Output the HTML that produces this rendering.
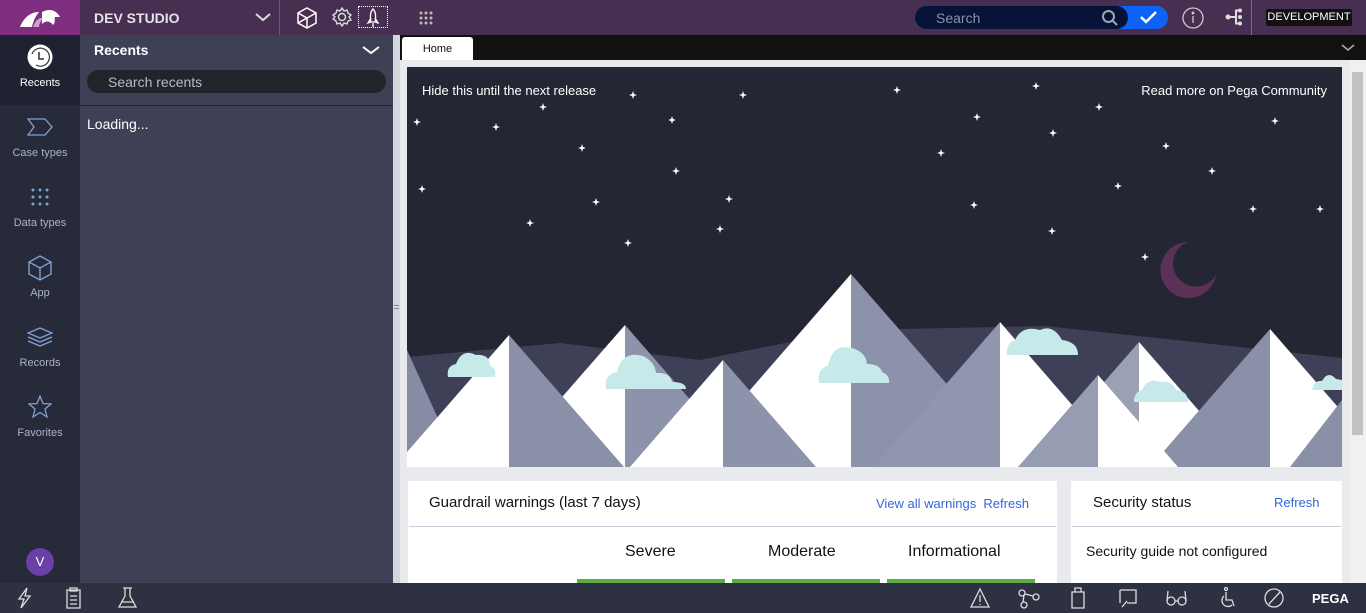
<!DOCTYPE html>
<html><head><meta charset="utf-8"><style>
*{margin:0;padding:0;box-sizing:border-box}
body{width:1366px;height:613px;overflow:hidden;font-family:"Liberation Sans",sans-serif;background:#e8eaee;position:relative}
.abs{position:absolute}
.top{left:0;top:0;width:1366px;height:35px;background:#472f52}
.logo{left:0;top:0;width:80px;height:35px;background:#7e2f7f}
.nav{left:0;top:35px;width:80px;height:548px;background:#272a39}
.navi{position:absolute;left:0;width:80px;text-align:center;color:#aab3c8;font-size:11px}
.rec{left:80px;top:35px;width:313px;height:548px;background:#3e4056}
.split{left:393px;top:35px;width:7px;height:548px;background:#d4d6dc}
.tabs{left:400px;top:35px;width:966px;height:25px;background:#111}
.bottom{left:0;top:583px;width:1366px;height:30px;background:#2e3142}
.card{background:#fff;position:absolute}
.link{color:#3366dd;font-size:13px}
</style></head><body>
<div class="abs top"></div>
<div class="abs logo"><svg width="80" height="35"><path d="M20 27 C24 17 31 12 39 12 C35 17 33 22 32 27 Z" fill="#fff"/><path d="M42 12 C50 8 56 10 60 17 L55 17 C54 20 56 22 53 25 C50 21 46 20 42 24 Z" fill="#fff"/><path d="M33 27 C35 21 39 17 43 18 C41 21 39 24 39 27Z" fill="#c9a3c9"/></svg></div>
<div class="abs" style="left:94px;top:10px;color:#e6e1ea;font-weight:bold;font-size:14px">DEV STUDIO</div>
<svg class="abs" style="left:255px;top:12px" width="16" height="10"><path d="M1 2 L8 8 L15 2" stroke="#ddd" stroke-width="2" fill="none"/></svg>
<div class="abs" style="left:279px;top:0;width:1px;height:35px;background:#6b5573"></div>
<svg class="abs" style="left:296px;top:7px" width="22" height="22" fill="none" stroke="#fff" stroke-width="1.5"><path d="M11 1 L20 6 L20 16 L11 21 L2 16 L2 6 Z M2 6 L11 11 L20 6 M11 11 L11 21 M2 16 L20 6"/></svg>
<svg class="abs" style="left:332px;top:7px" width="20" height="20" fill="none" stroke="#ddd" stroke-width="1.4"><circle cx="10" cy="10" r="3.5"/><path d="M10 1 L12 4 L15 3 L16 6 L19 8 L17 10 L19 13 L16 14 L15 17 L12 16 L10 19 L8 16 L5 17 L4 14 L1 12 L3 10 L1 8 L4 6 L5 3 L8 4 Z"/></svg>
<div class="abs" style="left:358px;top:6px;width:30px;height:22px;border:1px dotted #fff"></div>
<svg class="abs" style="left:365px;top:8px" width="16" height="20" fill="none" stroke="#fff" stroke-width="1.3"><path d="M8 1 C11 4 11 9 10 14 L6 14 C5 9 5 4 8 1 Z M6 10 L3 15 L6 14 M10 10 L13 15 L10 14 M8 15 L8 19"/></svg>
<svg class="abs" style="left:419px;top:11px" width="14" height="14" fill="#bbb"><circle cx="2" cy="2" r="1.5"/><circle cx="7" cy="2" r="1.5"/><circle cx="12" cy="2" r="1.5"/><circle cx="2" cy="7" r="1.5"/><circle cx="7" cy="7" r="1.5"/><circle cx="12" cy="7" r="1.5"/><circle cx="2" cy="12" r="1.5"/><circle cx="7" cy="12" r="1.5"/><circle cx="12" cy="12" r="1.5"/></svg>
<div class="abs" style="left:915px;top:6px;width:253px;height:23px;border-radius:12px;background:#0d63f5"></div>
<div class="abs" style="left:915px;top:6px;width:213px;height:23px;border-radius:12px;background:#061237;color:#8b93a8;font-size:14px;padding:4px 0 0 21px">Search</div>
<svg class="abs" style="left:1101px;top:9px" width="18" height="18" fill="none" stroke="#9aa" stroke-width="2"><circle cx="7.5" cy="7.5" r="5.5"/><path d="M12 12 L16 16"/></svg>
<svg class="abs" style="left:1140px;top:11px" width="18" height="13" fill="none" stroke="#fff" stroke-width="2.5"><path d="M1 6 L6 11 L16 1"/></svg>
<svg class="abs" style="left:1182px;top:7px" width="22" height="22" fill="none" stroke="#ccc" stroke-width="1.3"><circle cx="11" cy="11" r="10"/><path d="M11 9 L11 16"/><circle cx="11" cy="6" r=".8" fill="#ccc"/></svg>
<svg class="abs" style="left:1225px;top:8px" width="18" height="18" fill="#ddd"><circle cx="3" cy="9" r="2.5"/><circle cx="15" cy="2.5" r="2"/><circle cx="15" cy="9" r="2"/><circle cx="15" cy="15.5" r="2"/><path d="M3 8 h8 v2 h-8z M10 2 h2 v14 h-2z M10 1.5h4v2h-4z M10 14.5h4v2h-4z" /></svg>
<div class="abs" style="left:1251px;top:0;width:1px;height:35px;background:#786880"></div>
<div class="abs" style="left:1266px;top:9px;width:86px;height:17px;background:#111;color:#fff;font-size:11px;text-align:center;line-height:17px;border-radius:2px">DEVELOPMENT</div>

<div class="abs nav"></div>
<div class="abs" style="left:0;top:35px;width:80px;height:70px;background:#1f2230"></div>
<svg class="abs" style="left:27px;top:44px" width="26" height="26"><circle cx="13" cy="13" r="12.5" fill="#fff"/><path d="M5 10 A9 9 0 1 1 9 21" stroke="#333" stroke-width="1.2" fill="none"/><path d="M12 8 L12 15 L17 15" stroke="#333" stroke-width="1.5" fill="none"/></svg>
<div class="navi" style="top:77px;color:#fff">Recents</div>
<svg class="abs" style="left:27px;top:118px" width="26" height="18" fill="none" stroke="#7ea1d8" stroke-width="1.3"><path d="M1 1 L18 1 L25 9 L18 17 L1 17 L7 9 Z"/></svg>
<div class="navi" style="top:147px">Case types</div>
<svg class="abs" style="left:31px;top:188px" width="18" height="18" fill="#7ea1d8"><circle cx="2" cy="2" r="1.5"/><circle cx="9" cy="2" r="1.5"/><circle cx="16" cy="2" r="1.5"/><circle cx="2" cy="9" r="1.5"/><circle cx="9" cy="9" r="1.5"/><circle cx="16" cy="9" r="1.5"/><circle cx="2" cy="16" r="1.5"/><circle cx="9" cy="16" r="1.5"/><circle cx="16" cy="16" r="1.5"/></svg>
<div class="navi" style="top:217px">Data types</div>
<svg class="abs" style="left:28px;top:255px" width="25" height="26" fill="none" stroke="#7ea1d8" stroke-width="1.4"><path d="M12 1 L23 7 L23 19 L12 25 L1 19 L1 7 Z M1 7 L12 13 L23 7 M12 13 L12 25"/></svg>
<div class="navi" style="top:287px">App</div>
<svg class="abs" style="left:27px;top:327px" width="26" height="20" fill="none" stroke="#7ea1d8" stroke-width="1.3"><path d="M13 1 L25 6 L13 11 L1 6 Z M1 10 L13 15 L25 10 M1 14 L13 19 L25 14"/></svg>
<div class="navi" style="top:357px">Records</div>
<svg class="abs" style="left:28px;top:395px" width="24" height="23" fill="none" stroke="#7ea1d8" stroke-width="1.3"><path d="M12 1 L15 8.5 L23 9 L17 14 L19 22 L12 17.5 L5 22 L7 14 L1 9 L9 8.5 Z"/></svg>
<div class="navi" style="top:427px">Favorites</div>
<div class="abs" style="left:26px;top:548px;width:28px;height:28px;border-radius:50%;background:#6a3fa6;color:#fff;font-size:13px;text-align:center;line-height:28px">V</div>

<div class="abs rec"></div>
<div class="abs" style="left:94px;top:42px;color:#fff;font-weight:bold;font-size:14px">Recents</div>
<svg class="abs" style="left:362px;top:45px" width="18" height="10"><path d="M1 2 L9 8 L17 2" stroke="#fff" stroke-width="2" fill="none"/></svg>
<div class="abs" style="left:87px;top:70px;width:299px;height:23px;border-radius:12px;background:#1f2529;color:#b8bcc4;font-size:14px;padding:4px 0 0 21px">Search recents</div>
<div class="abs" style="left:80px;top:105px;width:313px;height:1px;background:#222532"></div>
<div class="abs" style="left:87px;top:116px;color:#fff;font-size:14px">Loading...</div>
<div class="abs split"></div>
<div class="abs" style="left:394px;top:305px;width:5px;height:1px;background:#888;box-shadow:0 3px #888"></div>

<div class="abs tabs"></div>
<div class="abs" style="left:402px;top:37px;width:71px;height:23px;background:#fff;border-radius:3px 3px 0 0;font-size:11px;text-align:center;line-height:24px;color:#111">Home</div>
<svg class="abs" style="left:1341px;top:44px" width="14" height="8"><path d="M1 1 L7 6 L13 1" stroke="#aaa" stroke-width="1.5" fill="none"/></svg>
<div class="abs" style="left:1350px;top:60px;width:16px;height:523px;background:#f0f0f0"></div>
<div class="abs" style="left:1352px;top:72px;width:11px;height:363px;background:#c1c1c1"></div>

<svg class="abs" style="left:407px;top:67px" width="935" height="400" viewBox="407 67 935 400">
<rect x="407" y="67" width="935" height="400" fill="#242633"/>
<defs><path id="s" d="M0 -4 L1 -1 L4 0 L1 1 L0 4 L-1 1 L-4 0 L-1 -1Z"/></defs>
<g fill="#fff">
<use href="#s" x="417" y="122"/><use href="#s" x="496" y="127"/><use href="#s" x="543" y="107"/><use href="#s" x="582" y="148"/><use href="#s" x="633" y="95"/><use href="#s" x="672" y="120"/><use href="#s" x="676" y="171"/><use href="#s" x="743" y="95"/><use href="#s" x="729" y="199"/><use href="#s" x="720" y="229"/><use href="#s" x="628" y="243"/><use href="#s" x="530" y="223"/><use href="#s" x="596" y="202"/><use href="#s" x="422" y="189"/><use href="#s" x="897" y="90"/><use href="#s" x="941" y="153"/><use href="#s" x="977" y="117"/><use href="#s" x="974" y="205"/><use href="#s" x="1036" y="86"/><use href="#s" x="1053" y="133"/><use href="#s" x="1052" y="231"/><use href="#s" x="1099" y="107"/><use href="#s" x="1118" y="186"/><use href="#s" x="1166" y="146"/><use href="#s" x="1212" y="171"/><use href="#s" x="1275" y="121"/><use href="#s" x="1145" y="257"/><use href="#s" x="1253" y="209"/><use href="#s" x="1320" y="209"/>
</g>
<path d="M1188 242 A28 28 0 1 0 1216 275 A23 23 0 1 1 1188 242Z" fill="#5c3158"/>
<polygon points="407,357 560,343 700,360 850,330 1045,326 1342,358 1342,467 407,467" fill="#3e4057"/>
<g>
<polygon points="501,467 625,325 625,467" fill="#fff"/><polygon points="625,325 749,467 625,467" fill="#8d93aa"/>
<polygon points="683,467 851,274 851,467" fill="#fff"/><polygon points="851,274 1019,467 851,467" fill="#8c92a9"/>
<polygon points="874,467 1000,322 1000,467" fill="#9096ad"/><polygon points="1000,322 1126,467 1000,467" fill="#fff"/>
<polygon points="1030,467 1139,342 1139,467" fill="#9ba0b5"/><polygon points="1139,342 1248,467 1139,467" fill="#fff"/>
<polygon points="1150,467 1270,329 1270,467" fill="#8a90a7"/><polygon points="1270,329 1390,467 1270,467" fill="#fff"/>
<polygon points="1290,467 1342,400 1342,467" fill="#8a90a7"/>
<polygon points="407,350 460,467 407,467" fill="#868ca4"/>
<polygon points="394,467 509,335 509,467" fill="#fff"/><polygon points="509,335 624,467 509,467" fill="#8a90a7"/>
<polygon points="630,467 723,360 723,467" fill="#fff"/><polygon points="723,360 816,467 723,467" fill="#8d93aa"/>
<polygon points="1018,467 1098,375 1098,467" fill="#969cb2"/><polygon points="1098,375 1178,467 1098,467" fill="#fff"/>
</g>
<g fill="#c6eaea">
<path d="M448 377 Q446 366 456 364 Q462 348 476 355 Q490 354 490 366 Q497 368 495 377Z"/>
<path d="M606 389 Q604 374 617 372 Q622 350 643 356 Q655 362 656 373 Q670 372 672 382 Q686 382 686 389Z"/>
<path d="M819 383 Q817 368 828 366 Q832 343 852 348 Q866 352 867 364 Q880 364 882 372 Q890 375 889 383Z"/>
<path d="M1007 355 Q1006 343 1015 340 Q1022 325 1040 330 Q1053 324 1062 340 Q1078 342 1078 355Z"/>
<path d="M1134 402 Q1134 392 1142 390 Q1148 377 1160 382 Q1172 380 1176 390 Q1188 391 1188 402Z"/>
<path d="M1312 390 Q1314 380 1322 381 Q1328 370 1336 379 L1342 380 L1342 390Z"/>
</g>
<text x="422" y="95" fill="#fff" font-size="13" font-family="Liberation Sans">Hide this until the next release</text>
<text x="1327" y="95" fill="#fff" font-size="13" font-family="Liberation Sans" text-anchor="end">Read more on Pega Community</text>
</svg>

<div class="card" style="left:408px;top:481px;width:649px;height:102px"></div>
<div class="abs" style="left:429px;top:494px;font-size:15px;color:#111">Guardrail warnings (last 7 days)</div>
<div class="abs link" style="left:876px;top:496px">View all warnings&nbsp; Refresh</div>
<div class="abs" style="left:409px;top:526px;width:647px;height:1px;background:#cdcddb"></div>
<div class="abs" style="left:625px;top:543px;font-size:16px;color:#111">Severe</div>
<div class="abs" style="left:768px;top:543px;font-size:16px;color:#111">Moderate</div>
<div class="abs" style="left:908px;top:543px;font-size:16px;color:#111">Informational</div>
<div class="abs" style="left:577px;top:579px;width:148px;height:4px;background:#5aac44"></div>
<div class="abs" style="left:732px;top:579px;width:148px;height:4px;background:#5aac44"></div>
<div class="abs" style="left:887px;top:579px;width:148px;height:4px;background:#5aac44"></div>
<div class="card" style="left:1071px;top:481px;width:271px;height:102px"></div>
<div class="abs" style="left:1093px;top:494px;font-size:15px;color:#111">Security status</div>
<div class="abs link" style="left:1274px;top:495px">Refresh</div>
<div class="abs" style="left:1072px;top:526px;width:269px;height:1px;background:#cdcddb"></div>
<div class="abs" style="left:1086px;top:543px;font-size:14px;color:#111">Security guide not configured</div>

<div class="abs bottom"></div>
<svg class="abs" style="left:0;top:583px" width="1366" height="30" fill="none" stroke="#ddd" stroke-width="1.3">
<path d="M27 5 L19 16 L24 16 L21 25 L30 13 L25 13 Z"/>
<path d="M67 7 h13 v18 h-13z M70 5 h7 v3 h-7z M70 13 h7 M70 17 h7 M70 21 h7"/>
<path d="M125 5 v8 l-6 11 h17 l-6 -11 v-8 M123 5 h9 M121 19 h13"/>
<path d="M980 6 L971 24 L989 24 Z M980 12 v7 M980 21 v1"/>
<circle cx="1022" cy="10" r="3"/><circle cx="1036" cy="14" r="3"/><circle cx="1024" cy="22" r="3"/><path d="M1024 12 L1023 19 M1025 11 L1033 13"/>
<path d="M1072 9 h12 v16 h-12z M1075 5 h6 v4 h-6z"/>
<path d="M1120 7 h16 v13 h-9 M1120 7 v13 M1122 24 l5 -6"/>
<circle cx="1171" cy="18" r="4"/><circle cx="1182" cy="18" r="4"/><path d="M1168 8 l-1 10 M1185 8 l1 10 M1175 18 h3"/>
<circle cx="1226" cy="6" r="1.5"/><path d="M1226 9 v8 h6 l2 6 M1224 13 a6 6 0 1 0 8 9"/>
<circle cx="1274" cy="15" r="9"/><path d="M1269 21 L1280 9"/>
</svg>
<div class="abs" style="left:1312px;top:591px;color:#fff;font-weight:bold;font-size:13px">PEGA</div>
</body></html>
